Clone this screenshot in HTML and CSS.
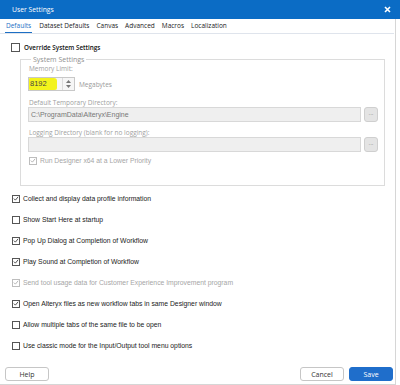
FILE: index.html
```html
<!DOCTYPE html>
<html>
<head>
    <link rel="stylesheet" href="styles.css">
</head>
<body>
    <div class="titlebar">
        <span class="title">User Settings</span>
        <svg class="close" width="7" height="7" viewBox="0 0 7 7"><path d="M1 1L6 6M6 1L1 6" stroke="#fff" stroke-width="1.6"/></svg>
    </div>
    <div class="panel">
        <div class="tabs">
            <span class="tab active">Defaults</span>
            <span class="tab">Dataset Defaults</span>
            <span class="tab">Canvas</span>
            <span class="tab">Advanced</span>
            <span class="tab">Macros</span>
            <span class="tab">Localization</span>
        </div>

        <label class="check override"><span class="box"></span><span class="label strong">Override System Settings</span></label>

        <fieldset class="group">
            <legend>System Settings</legend>
            <p class="field-label first">Memory Limit:</p>
            <div class="memory">
                <div class="spin">
                    <span class="spin-value">8192</span>
                    <span class="spin-arrows">
                        <svg width="5" height="3" viewBox="0 0 5 3"><path d="M0 3L2.5 0L5 3Z" fill="#777"/></svg>
                        <svg width="5" height="3" viewBox="0 0 5 3"><path d="M0 0L2.5 3L5 0Z" fill="#777"/></svg>
                    </span>
                </div>
                <span class="unit">Megabytes</span>
            </div>
            <p class="field-label temp">Default Temporary Directory:</p>
            <div class="path-row">
                <div class="path">C:\ProgramData\Alteryx\Engine</div>
                <span class="browse">...</span>
            </div>
            <p class="field-label">Logging Directory (blank for no logging):</p>
            <div class="path-row">
                <div class="path"></div>
                <span class="browse">...</span>
            </div>
            <label class="check inner disabled"><span class="box checked"><svg width="7" height="7" viewBox="0 0 7 7"><path d="M1 3.6L2.8 5.4L6 1.5" fill="none" stroke="#aaa" stroke-width="1"/></svg></span><span class="label">Run Designer x64 at a Lower Priority</span></label>
        </fieldset>

        <div class="options">
            <label class="check"><span class="box checked"><svg width="7" height="7" viewBox="0 0 7 7"><path d="M1 3.6L2.8 5.4L6 1.5" fill="none" stroke="#333" stroke-width="1"/></svg></span><span class="label">Collect and display data profile information</span></label>
            <label class="check"><span class="box"></span><span class="label">Show Start Here at startup</span></label>
            <label class="check"><span class="box checked"><svg width="7" height="7" viewBox="0 0 7 7"><path d="M1 3.6L2.8 5.4L6 1.5" fill="none" stroke="#333" stroke-width="1"/></svg></span><span class="label">Pop Up Dialog at Completion of Workflow</span></label>
            <label class="check"><span class="box checked"><svg width="7" height="7" viewBox="0 0 7 7"><path d="M1 3.6L2.8 5.4L6 1.5" fill="none" stroke="#333" stroke-width="1"/></svg></span><span class="label">Play Sound at Completion of Workflow</span></label>
            <label class="check disabled"><span class="box checked"><svg width="7" height="7" viewBox="0 0 7 7"><path d="M1 3.6L2.8 5.4L6 1.5" fill="none" stroke="#aaa" stroke-width="1"/></svg></span><span class="label">Send tool usage data for Customer Experience Improvement program</span></label>
            <label class="check"><span class="box checked"><svg width="7" height="7" viewBox="0 0 7 7"><path d="M1 3.6L2.8 5.4L6 1.5" fill="none" stroke="#333" stroke-width="1"/></svg></span><span class="label">Open Alteryx files as new workflow tabs in same Designer window</span></label>
            <label class="check"><span class="box"></span><span class="label">Allow multiple tabs of the same file to be open</span></label>
            <label class="check"><span class="box"></span><span class="label">Use classic mode for the Input/Output tool menu options</span></label>
        </div>

        <div class="footer">
            <button class="btn">Help</button>
            <div class="footer-right">
                <button class="btn">Cancel</button>
                <button class="btn primary">Save</button>
            </div>
        </div>
    </div>
</body>
</html>
```

FILE: styles.css
```css
body {
    margin: 0;
    width: 400px;
    height: 385px;
    overflow: hidden;
    background: #ffffff;
    font-family: "Liberation Sans", Arial, sans-serif;
    font-size: 6.8px;
    color: #222222;
}
.titlebar {
    height: 19px;
    background: #0b6cc5;
    display: flex;
    align-items: center;
    justify-content: space-between;
    padding: 0 9px 0 12px;
    color: #ffffff;
    font-family: "Open Sans", sans-serif;
    font-size: 6.8px;
}
.close {
    display: block;
}
.panel {
    width: 396px;
    height: 366px;
    border-right: 1px solid #d6d6d6;
    border-bottom: 1px solid #d6d6d6;
    box-sizing: border-box;
}
.tabs {
    display: flex;
    gap: 7px;
    height: 15px;
    margin-right: 1px;
    padding-left: 5px;
    border-bottom: 1px solid #dfe4ec;
    box-sizing: border-box;
    align-items: flex-end;
    font-family: "Open Sans", sans-serif;
    font-size: 6.5px;
}
.tab {
    padding: 0 0 2px;
    line-height: 10px;
    color: #222;
}
.tab.active {
    color: #1d6fc4;
    border-bottom: 1px solid #1d6fc4;
    padding: 0 1px 1px;
}
.check {
    display: flex;
    align-items: center;
    gap: 3px;
    height: 9px;
    line-height: 9px;
}
.box {
    width: 8px;
    height: 8px;
    border: 1px solid #555;
    box-sizing: border-box;
    display: flex;
    align-items: center;
    justify-content: center;
    background: #fff;
}
.box svg {
    display: block;
}
.check.disabled {
    color: #a6a6a6;
}
.check.disabled .box {
    border-color: #bdbdbd;
}
.override {
    margin: 9px 0 0 11px;
    gap: 4px;
}
.override .box {
    width: 9px;
    height: 9px;
}
.strong {
    font-family: "Open Sans", sans-serif;
    font-size: 6.3px;
    font-weight: 600;
    color: #111;
}
.group {
    margin: 3px 10px 0 20px;
    padding: 0 6px 0 7px;
    border: 1px solid #dcdcdc;
    height: 131px;
    box-sizing: border-box;
    color: #a0a0a0;
}
.group legend {
    padding: 0 2px;
    margin-left: 3px;
    line-height: 9px;
    font-family: "Open Sans", sans-serif;
    font-size: 7px;
    color: #8f8f8f;
}
.field-label {
    margin: 7px 0 0 1px;
    line-height: 8px;
    font-family: "Open Sans", sans-serif;
    font-size: 6.5px;
}
.field-label.first {
    margin-top: 1px;
}
.field-label.temp {
    margin-top: 8px;
}
.memory {
    display: flex;
    align-items: center;
    gap: 4px;
    margin-top: 4px;
}
.spin {
    width: 47px;
    height: 14px;
    border: 1px solid #c8c8c8;
    background: #f6f6f6;
    box-sizing: border-box;
    display: flex;
    align-items: center;
    justify-content: space-between;
}
.spin-value {
    background: #f3f31c;
    color: #444;
    height: 12px;
    line-height: 12px;
    width: 27px;
    padding-left: 1px;
    font-size: 7.5px;
    border-radius: 1px 3px 2px 1px;
}
.spin-arrows {
    display: flex;
    flex-direction: column;
    gap: 2px;
    padding: 0 3px;
    border-left: 1px solid #dcdcdc;
    height: 12px;
    justify-content: center;
}
.spin-arrows svg {
    display: block;
}
.unit {
    font-family: "Open Sans", sans-serif;
    font-size: 6.5px;
    color: #9a9a9a;
}
.path-row {
    display: flex;
    align-items: center;
    gap: 3px;
    margin-top: 0;
}
.path {
    width: 333px;
    height: 15px;
    line-height: 13px;
    border: 1px solid #d8d8d8;
    background: #efefef;
    box-sizing: border-box;
    padding-left: 2px;
    color: #777;
    font-size: 7px;
}
.browse {
    width: 14px;
    height: 15px;
    border: 1px solid #cfcfcf;
    background: #e4e4e4;
    border-radius: 3px;
    box-sizing: border-box;
    text-align: center;
    line-height: 10px;
    color: #777;
    font-size: 6px;
}
.check.inner {
    margin: 4px 0 0 1px;
}
.options {
    display: flex;
    flex-direction: column;
    gap: 12px;
    margin: 8px 0 0 12px;
}
.footer {
    display: flex;
    justify-content: space-between;
    margin: 17px 2px 0 5px;
}
.footer-right {
    display: flex;
    gap: 5px;
}
.btn {
    width: 44px;
    height: 14px;
    padding: 0;
    border: 1px solid #c6c6c6;
    border-radius: 3px;
    background: #ffffff;
    font-family: "Open Sans", sans-serif;
    font-size: 7px;
    color: #333;
}
.btn.primary {
    background: #1f6ecb;
    border-color: #1f6ecb;
    color: #ffffff;
}
```
